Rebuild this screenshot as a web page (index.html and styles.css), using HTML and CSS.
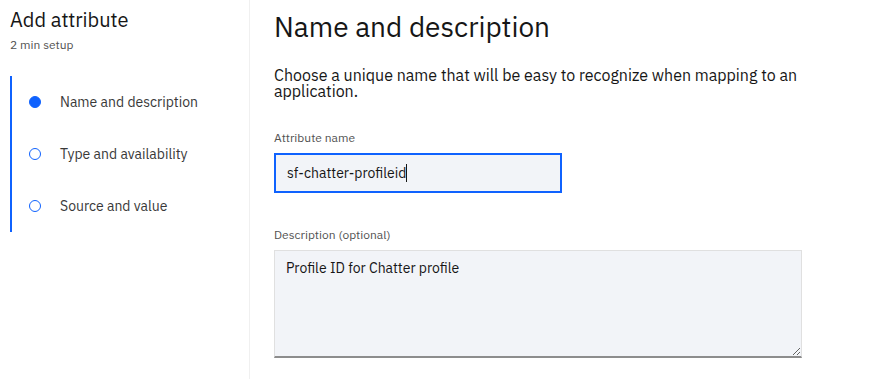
FILE: index.html
```html
<!DOCTYPE html>
<html lang="en">
<head>
    <meta charset="UTF-8">
    <meta name="viewport" content="width=device-width, initial-scale=1.0">
    <title>Add attribute</title>
    <link rel="stylesheet" href="styles.css">
</head>
<body>
    <div class="page">
        <aside class="sidebar">
            <h2 class="sidebar-title">Add attribute</h2>
            <div class="sidebar-sub">2 min setup</div>
            <ul class="steps">
                <li class="step current"><span class="step-dot"></span>Name and description</li>
                <li class="step"><span class="step-dot"></span>Type and availability</li>
                <li class="step"><span class="step-dot"></span>Source and value</li>
            </ul>
        </aside>

        <main class="content">
            <h1>Name and description</h1>
            <p class="intro">Choose a unique name that will be easy to recognize when mapping to an application.</p>

            <div class="field">
                <label class="field-label">Attribute name</label>
                <div class="text-input focused"><span>sf-chatter-profileid</span><span class="caret"></span></div>
            </div>

            <div class="field">
                <label class="field-label" for="desc">Description (optional)</label>
                <textarea id="desc" class="text-area">Profile ID for Chatter profile</textarea>
            </div>
        </main>
    </div>
</body>
</html>
```

FILE: styles.css
```css
body {
    margin: 0;
    font-family: 'IBM Plex Sans', Roboto, 'Liberation Sans', sans-serif;
    color: #161616;
    background: #fff;
}

.page {
    display: flex;
    height: 379px;
    overflow: hidden;
}

/* Sidebar */
.sidebar {
    width: 250px;
    border-right: 1px solid #f0f0f0;
    padding: 8px 0 0 10px;
    box-sizing: border-box;
    flex-shrink: 0;
}

.sidebar-title {
    margin: 0;
    font-size: 20px;
    font-weight: 400;
    line-height: 24px;
}

.sidebar-sub {
    margin-top: 5px;
    font-size: 12px;
    color: #525252;
    line-height: 16px;
}

.steps {
    list-style: none;
    margin: 23px 0 0;
    padding: 0;
    border-left: 2px solid #0f62fe;
}

.step {
    display: flex;
    align-items: center;
    height: 52px;
    padding-left: 17px;
    font-size: 14px;
    color: #393939;
}

.step-dot {
    width: 10px;
    height: 10px;
    border: 1.5px solid #0f62fe;
    border-radius: 50%;
    margin-right: 19px;
}

.step.current .step-dot {
    background: #0f62fe;
}

/* Content */
.content {
    padding: 10px 0 0 24px;
    flex: 1;
}

h1 {
    margin: 0;
    font-size: 28px;
    font-weight: 400;
    line-height: 34px;
}

.intro {
    margin: 23px 0 0;
    width: 540px;
    font-size: 16px;
    line-height: 16px;
    color: #161616;
}

.field {
    margin-top: 31px;
}

.field + .field {
    margin-top: 34px;
}

.field-label {
    display: block;
    font-size: 12px;
    color: #525252;
    line-height: 16px;
    margin-bottom: 7px;
}

.text-input {
    width: 288px;
    height: 40px;
    box-sizing: border-box;
    background: #f2f4f8;
    border: 2px solid #0f62fe;
    padding: 0 11px;
    display: flex;
    align-items: center;
    font-size: 14px;
}

.caret {
    width: 1px;
    height: 18px;
    background: #161616;
}

.text-area {
    display: block;
    width: 528px;
    height: 108px;
    box-sizing: border-box;
    background: #f2f4f8;
    border: 1px solid #e0e0e0;
    border-bottom: 2px solid #8d8d8d;
    padding: 8px 11px;
    font-family: inherit;
    font-size: 14px;
    color: #161616;
    resize: vertical;
}
```
